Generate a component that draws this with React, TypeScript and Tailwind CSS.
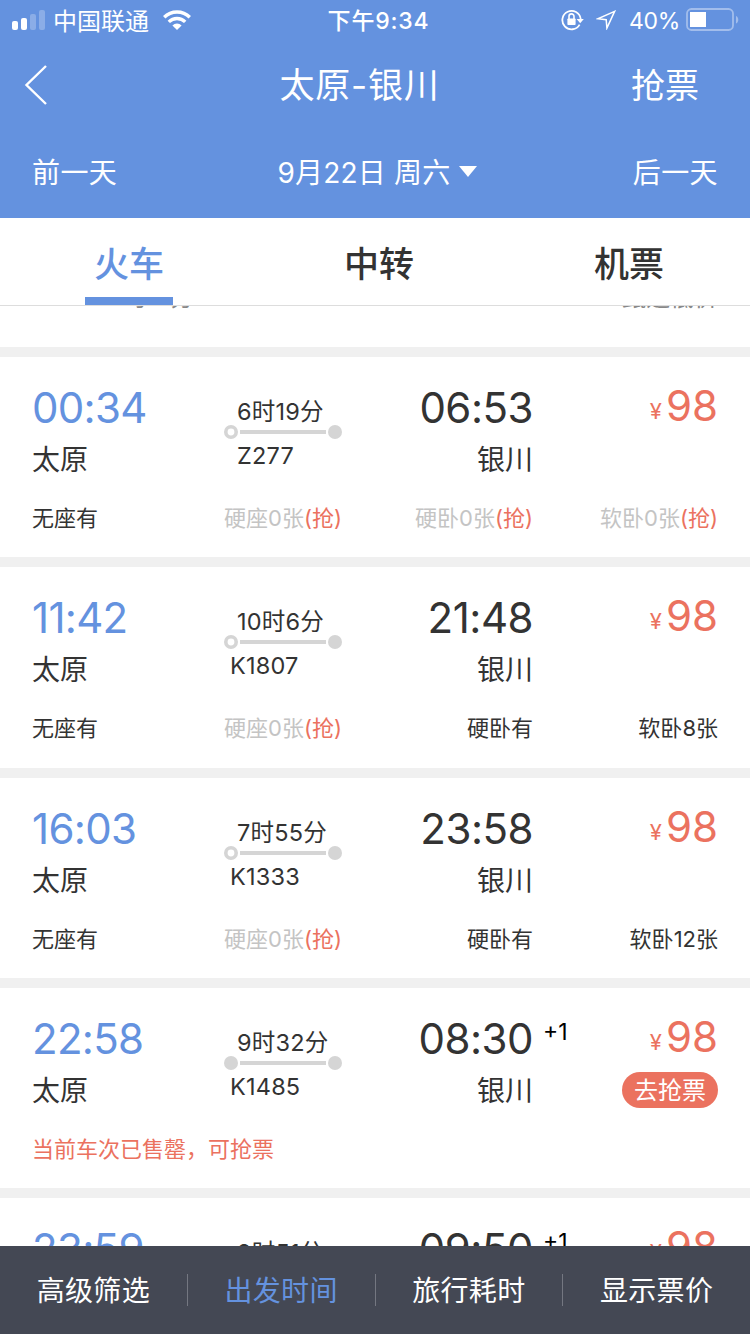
interface Seat {
  name: string;
  left: string;
  grab?: boolean;
}

interface Train {
  no: string;
  depart: string;
  arrive: string;
  duration: string;
  passing?: boolean;
  nextDay?: boolean;
  soldOut?: boolean;
  seats: Seat[];
}

const trains: Train[] = [
  {
    no: "Z277",
    depart: "00:34",
    arrive: "06:53",
    duration: "6时19分",
    seats: [
      { name: "无座", left: "有" },
      { name: "硬座", left: "0张", grab: true },
      { name: "硬卧", left: "0张", grab: true },
      { name: "软卧", left: "0张", grab: true },
    ],
  },
  {
    no: "K1807",
    depart: "11:42",
    arrive: "21:48",
    duration: "10时6分",
    seats: [
      { name: "无座", left: "有" },
      { name: "硬座", left: "0张", grab: true },
      { name: "硬卧", left: "有" },
      { name: "软卧", left: "8张" },
    ],
  },
  {
    no: "K1333",
    depart: "16:03",
    arrive: "23:58",
    duration: "7时55分",
    seats: [
      { name: "无座", left: "有" },
      { name: "硬座", left: "0张", grab: true },
      { name: "硬卧", left: "有" },
      { name: "软卧", left: "12张" },
    ],
  },
  {
    no: "K1485",
    depart: "22:58",
    arrive: "08:30",
    duration: "9时32分",
    passing: true,
    nextDay: true,
    soldOut: true,
    seats: [],
  },
  {
    no: "K1517",
    depart: "23:59",
    arrive: "09:50",
    duration: "9时51分",
    nextDay: true,
    seats: [],
  },
];

const filters = ["高级筛选", "出发时间", "旅行耗时", "显示票价"];

function StatusBar() {
  return (
    <div className="grid h-10 grid-cols-[1fr_auto_1fr] items-center pl-3 pr-[10px] text-[23px] leading-none">
      <div className="flex items-center">
        <svg width="34" height="22" viewBox="0 0 34 22" fill="white">
          <rect x="0" y="12" width="6" height="9" rx="2" />
          <rect x="9" y="9" width="6" height="12" rx="2" />
          <rect x="18" y="5" width="6" height="16" rx="2" opacity="0.25" />
          <rect x="27" y="1" width="6" height="20" rx="2" opacity="0.25" />
        </svg>
        <span className="ml-[7px] pt-[3px] text-[24px]">中国联通</span>
        <svg className="ml-3.5" width="28" height="20" viewBox="0 0 28 20" fill="none" stroke="white" strokeWidth="3.4">
          <path d="M1.2 7.2a18.2 18.2 0 0 1 25.6 0" />
          <path d="M5.8 11.9a11.7 11.7 0 0 1 16.4 0" />
          <path d="M14 20l-4.6-4.5a6.5 6.5 0 0 1 9.2 0z" fill="white" stroke="none" />
        </svg>
      </div>
      <div className="pl-[5px] pt-0.5 font-medium tracking-[0.8px]">下午9:34</div>
      <div className="flex items-center justify-end">
        <svg width="23" height="22" viewBox="0 0 23 22" fill="none" stroke="white" strokeWidth="1.8">
          <path d="M18.6 15.6A9.2 9.2 0 1 1 19.7 10" />
          <path d="M15.6 10h7.2l-3.6 4.2z" fill="white" stroke="none" />
          <rect x="6.4" y="9.5" width="8.2" height="6.6" rx="0.8" fill="white" stroke="none" />
          <path d="M8 10V7.4a2.5 2.5 0 0 1 5 0V10" strokeWidth="1.6" />
        </svg>
        <svg className="ml-3" width="20" height="20" viewBox="0 0 20 20" fill="none" stroke="white" strokeWidth="1.5">
          <path d="M18.6 1.4L1.8 8.8l8.4.9.7 8.4z" />
        </svg>
        <span className="ml-[13px] pt-0.5 tracking-[-0.3px]">40%</span>
        <svg className="ml-1.5" width="54" height="24" viewBox="0 0 54 24">
          <rect x="1" y="1" width="46" height="21" rx="4.5" fill="none" stroke="white" strokeWidth="1.8" opacity="0.4" />
          <rect x="4" y="4" width="16" height="15" fill="white" />
          <path d="M50 8c3 1 3 6.500 0 7.500z" fill="white" opacity="0.4" />
        </svg>
      </div>
    </div>
  );
}

function RouteLine({ passing }: { passing?: boolean }) {
  return (
    <svg className="mb-1 mt-px block" width="118" height="14" viewBox="0 0 118 14">
      {passing ? (
        <circle cx="7" cy="7" r="7" fill="#d5d5d5" />
      ) : (
        <circle cx="7" cy="7" r="5.200" fill="none" stroke="#d5d5d5" strokeWidth="3.600" />
      )}
      <rect x="16" y="5" width="86" height="4" fill="#d5d5d5" />
      <circle cx="111" cy="7" r="7" fill="#d5d5d5" />
    </svg>
  );
}

function SeatCell({ seat }: { seat: Seat }) {
  return (
    <span className={seat.grab ? "text-[#c4c4c4]" : ""}>
      {seat.name}
      {seat.left}
      {seat.grab && <span className="text-[#eb725f]">(抢)</span>}
    </span>
  );
}

function TrainCard({ train }: { train: Train }) {
  return (
    <div className="h-[210.250px] flex-none border-b-10 border-[#f0f0f0] bg-white px-8 pt-[27px]">
      <div className="grid h-[96px] grid-cols-[192px_118px_191px_1fr]">
        <div>
          <div className="text-[42px] leading-[48px] tracking-[-0.7px] text-[#6492df]">{train.depart}</div>
          <div className="mt-[10px] text-[28px] leading-9">太原</div>
        </div>
        <div className="whitespace-nowrap pt-4 text-[23.500px] leading-6 tracking-[0.2px]">
          <div className="pl-[13px]">{train.duration}</div>
          <RouteLine passing={train.passing} />
          <div className={train.no.length > 4 ? "pl-1.5 pt-px" : "pl-[13px] pt-px"}>{train.no}</div>
        </div>
        <div className="relative text-right">
          <div className="text-[42px] leading-[48px] tracking-[-0.5px]">{train.arrive}</div>
          {train.nextDay && (
            <span className="absolute left-[201px] top-[3px] text-[23px] leading-7 text-black">+1</span>
          )}
          <div className="mt-[10px] text-[28px] leading-9">银川</div>
        </div>
        <div className="flex flex-col items-end text-[#eb725f]">
          <div className="-mt-px flex h-[46px] items-baseline leading-[46px]">
            <span className="relative -top-0.5 mr-1 text-[22px]">¥</span>
            <span className="text-[42px]">98</span>
          </div>
          {train.soldOut && (
            <button className="mt-3 h-9 w-24 rounded-full bg-[#eb725f] text-[24px] leading-[38px] text-white">
              去抢票
            </button>
          )}
        </div>
      </div>
      {train.soldOut ? (
        <div className="mt-[22px] text-[22px] leading-8 text-[#eb725f]">当前车次已售罄，可抢票</div>
      ) : (
        <div className="mt-[22px] grid grid-cols-[192px_118px_191px_1fr] text-[22px] leading-8">
          {train.seats.map((seat, i) => (
            <div key={seat.name} className={i > 1 ? "text-right" : "whitespace-nowrap"}>
              <SeatCell seat={seat} />
            </div>
          ))}
        </div>
      )}
    </div>
  );
}

export default function App() {
  return (
    <div
      lang="zh-CN"
      className="flex h-[1334px] w-[750px] flex-col overflow-hidden bg-white font-['Inter','Noto_Sans_CJK_SC',sans-serif] text-[#333]"
    >
      <header className="h-[218px] flex-none bg-[#6492df] text-white">
        <StatusBar />
        <div className="grid h-[88px] grid-cols-[1fr_auto_1fr] items-center pl-5 pr-[51px] pt-0.5 text-[34px]">
          <svg className="ml-1" width="24" height="42" viewBox="0 0 24 42" fill="none" stroke="white" strokeWidth="2.4">
            <path d="M22 2L2.500 21L22 40" />
          </svg>
          <h1 className="text-[35px] tracking-[0.8px]">太原-银川</h1>
          <div className="text-right">抢票</div>
        </div>
        <div className="grid h-[88px] grid-cols-[1fr_auto_1fr] items-center px-8 pt-0.5 text-[28px] tracking-[0.4px]">
          <div>前一天</div>
          <div className="flex items-center gap-2 pl-1">
            <span className="tracking-[0.2px]">9月22日 周六</span>
            <svg className="-mt-1" width="18" height="11" viewBox="0 0 18 11" fill="white">
              <path d="M0 0h18L9 11z" />
            </svg>
          </div>
          <div className="text-right">后一天</div>
        </div>
      </header>

      <nav className="flex h-[88px] flex-none justify-between border-b border-[#ddd] pl-[85px] pr-[77px] text-[35px] font-medium leading-[92px]">
        <div className="w-[88px] border-b-8 border-[#6492df] text-center text-[#6492df]">火车</div>
        <div className="w-[88px] text-center">中转</div>
        <div className="w-[88px] text-center">机票</div>
      </nav>

      <main className="flex min-h-0 flex-1 flex-col overflow-hidden">
        <div className="h-[51px] flex-none overflow-hidden border-b-10 border-[#f0f0f0] px-8">
          <div className="-mt-[22px] flex justify-between text-[24px] leading-7 text-[#888]">
            <span className="pl-[76px] tracking-[-0.5px]">
              <span className="text-[#6492df]">4</span>时<span className="text-[#6492df]">18</span>分
            </span>
            <span>甄选低价</span>
          </div>
        </div>
        {trains.map((train) => (
          <TrainCard key={train.no} train={train} />
        ))}
      </main>

      <footer className="flex h-[88px] flex-none items-center bg-[#444854] text-[28px] tracking-[0.3px] text-white">
        {filters.map((label, i) => (
          <div
            key={label}
            className={`h-8 flex-1 border-[#747781] text-center leading-[35px] ${i < 3 ? "border-r" : ""} ${i === 1 ? "text-[#6492df]" : ""}`}
          >
            {label}
          </div>
        ))}
      </footer>
    </div>
  );
}
